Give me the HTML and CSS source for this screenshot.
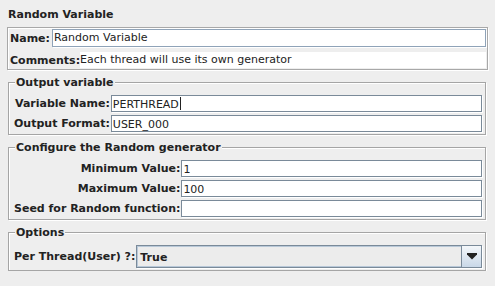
FILE: index.html
```html
<!DOCTYPE html>
<html lang="en">
<head>
  <meta charset="UTF-8">
  <title>Random Variable</title>
  <link rel="stylesheet" href="styles.css">
</head>
<body>
  <div class="title">Random Variable</div>

  <div class="name-panel">
    <div class="row">
      <span class="label">Name:</span>
      <div class="field name-field">Random Variable</div>
    </div>
    <div class="row comments-row">
      <span class="label">Comments:</span>
      <div class="comments">Each thread will use its own generator</div>
    </div>
  </div>

  <fieldset class="group">
    <legend>Output variable</legend>
    <div class="form">
      <span class="label">Variable Name:</span>
      <div class="field">PERTHREAD<span class="caret"></span></div>
      <span class="label">Output Format:</span>
      <div class="field">USER_000</div>
    </div>
  </fieldset>

  <fieldset class="group">
    <legend>Configure the Random generator</legend>
    <div class="form">
      <span class="label">Minimum Value:</span>
      <div class="field">1</div>
      <span class="label">Maximum Value:</span>
      <div class="field">100</div>
      <span class="label">Seed for Random function:</span>
      <div class="field"></div>
    </div>
  </fieldset>

  <fieldset class="group">
    <legend>Options</legend>
    <div class="form">
      <span class="label">Per Thread(User) ?:</span>
      <div class="combo">
        <span class="combo-value">True</span>
        <span class="combo-button">
          <svg width="10" height="7" viewBox="0 0 10 7"><path d="M0 0h10v1.5L5 6.5 0 1.5z" fill="#222"/></svg>
        </span>
      </div>
    </div>
  </fieldset>
</body>
</html>
```

FILE: styles.css
```css
body {
  margin: 0;
  background: #eeeeee;
  font-family: "DejaVu Sans", "Liberation Sans", sans-serif;
  font-size: 11px;
  color: #222;
}
.title {
  font-weight: bold;
  line-height: 13px;
  height: 19px;
  padding: 8px 0 0 8px;
}
.label {
  font-weight: bold;
  white-space: nowrap;
}
.name-panel {
  margin: 0 7px;
  border: 1px solid #a8a8a8;
  box-shadow: inset 1px 1px 0 #fff, 1px 1px 0 #fff;
  padding: 1px 1px 1px 2px;
}
.row {
  display: flex;
  align-items: center;
}
.name-panel .label {
  padding-right: 2px;
}
.comments-row {
  margin-top: 5px;
}
.comments-row .label {
  padding-right: 0;
}
.comments {
  flex: 1;
  background: #fff;
  height: 16px;
  line-height: 16px;
}
.field {
  flex: 1;
  height: 17px;
  line-height: 17px;
  background: #fff;
  border: 1px solid #7a8a99;
  box-shadow: 1px 1px 0 #fff;
  padding-left: 1px;
  box-sizing: border-box;
  white-space: nowrap;
}
.name-field {
  height: 18px;
  line-height: 16px;
  border-color: #8fa3b8;
}
.caret {
  display: inline-block;
  width: 1px;
  height: 13px;
  background: #222;
  vertical-align: -2px;
  margin-left: 1px;
}
.group {
  margin: 6px 9px 0 8px;
  border: 1px solid #a5a5a5;
  box-shadow: inset 1px 1px 0 #fff, 1px 1px 0 #fff;
  padding: 6px 3px 2px 5px;
  min-width: 0;
}
.group legend {
  font-weight: bold;
  line-height: 13px;
  padding: 0 1px;
  margin-left: 1px;
  background: #eeeeee;
}
.form {
  display: grid;
  grid-template-columns: auto 1fr;
  row-gap: 3px;
  align-items: center;
}
.form .label {
  justify-self: end;
  padding-right: 1px;
}
.combo {
  display: flex;
  height: 23px;
  border: 1px solid #7a8a99;
  box-sizing: border-box;
  background: #ececec;
  box-shadow: inset 1px 1px 0 #fff, 1px 1px 0 #fff;
}
.combo-value {
  flex: 1;
  font-weight: bold;
  line-height: 21px;
  padding-left: 2px;
  border: 1px solid #b8c8d8;
  border-right: none;
}
.combo-button {
  width: 19px;
  border-left: 1px solid #7a8a99;
  background: linear-gradient(#f4f7fa, #c9d8e8);
  display: flex;
  align-items: center;
  justify-content: center;
}
```
